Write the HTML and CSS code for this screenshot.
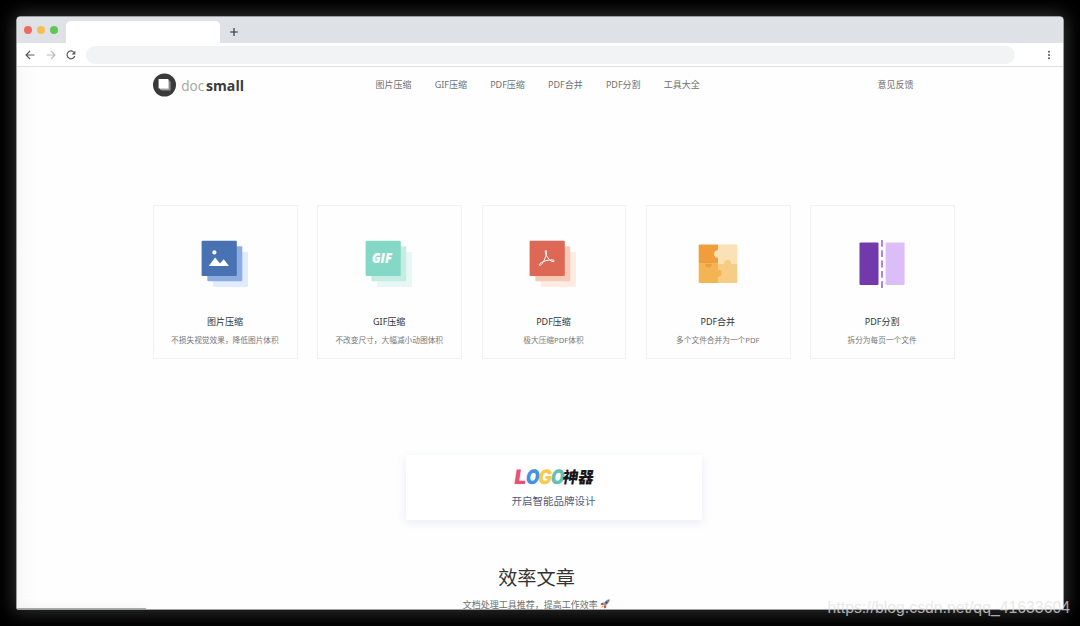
FILE: index.html
```html
<!DOCTYPE html>
<html lang="zh-CN">
<head>
    <meta charset="UTF-8">
    <meta name="viewport" content="width=device-width, initial-scale=1.0">
    <title>docsmall</title>
    <link rel="stylesheet" href="styles.css">
</head>
<body>
    <div class="window">
        <div class="tabbar">
            <div class="lights">
                <span class="light red"></span>
                <span class="light yellow"></span>
                <span class="light green"></span>
            </div>
            <div class="tab"></div>
            <svg class="plus" width="10" height="10" viewBox="0 0 10 10"><path d="M5 1v8M1 5h8" stroke="#333639" stroke-width="1.2"/></svg>
        </div>
        <div class="toolbar">
            <svg width="10" height="10" viewBox="0 0 10 10" fill="none" stroke="#55585c" stroke-width="1.1"><path d="M9.4 5H1.2M5 1L1 5l4 4"/></svg>
            <svg width="10" height="10" viewBox="0 0 10 10" fill="none" stroke="#b9bbbe" stroke-width="1.1"><path d="M.6 5h8.2M5 1l4 4-4 4"/></svg>
            <svg width="10" height="10" viewBox="0 0 10 10" fill="none" stroke="#55585c" stroke-width="1.2"><path d="M8.7 6A3.9 3.9 0 1 1 7.9 2.3"/><path d="M9.3.7v3.7H5.6z" fill="#55585c" stroke="none"/></svg>
            <div class="address"></div>
            <svg class="more" width="4" height="10" viewBox="0 0 4 10" fill="#505357"><circle cx="2" cy="1.7" r="1"/><circle cx="2" cy="5" r="1"/><circle cx="2" cy="8.3" r="1"/></svg>
        </div>

        <div class="page">
            <header class="header">
                <svg class="logo" width="94" height="24" viewBox="0 0 94 24">
                    <circle cx="11.5" cy="12" r="11.5" fill="#3a3a3a"/>
                    <path d="M8.5 8.5h9.3v9.3H8.5z" fill="#777"/>
                    <path d="M7 7.3h9.4v9.4H7z" fill="#aaa"/>
                    <path d="M5.6 6.1h9.8v9.5H5.6z" fill="#fff"/>
                    <text class="logo-doc" x="28.3" y="17.7" textLength="23" lengthAdjust="spacingAndGlyphs">doc</text>
                    <text class="logo-small" x="53" y="17.7" textLength="38" lengthAdjust="spacingAndGlyphs">small</text>
                </svg>
                <nav class="nav">
                    <a>图片压缩</a>
                    <a>GIF压缩</a>
                    <a>PDF压缩</a>
                    <a>PDF合并</a>
                    <a>PDF分割</a>
                    <a>工具大全</a>
                </nav>
                <a class="feedback">意见反馈</a>
            </header>

            <div class="cards">
                <div class="card">
                    <svg class="icon" width="50" height="50" viewBox="0 0 50 50">
                        <rect x="13" y="13" width="35" height="35" rx="1" fill="#e1ebfd"/>
                        <rect x="7.3" y="7.3" width="35" height="35" rx="1" fill="#8dace1"/>
                        <rect x="1.6" y="1.7" width="35.2" height="35.2" rx="1" fill="#4872b1"/>
                        <circle cx="14.4" cy="13.4" r="2.1" fill="#fff"/>
                        <path d="M8.8 27l6.3-8.6 4.9 6 3.7-4.1L29 27z" fill="#fff"/>
                    </svg>
                    <h3>图片压缩</h3>
                    <p>不损失视觉效果，降低图片体积</p>
                </div>
                <div class="card">
                    <svg class="icon" width="50" height="50" viewBox="0 0 50 50">
                        <rect x="13" y="13" width="35" height="35" rx="1" fill="#e7f8f4"/>
                        <rect x="7.3" y="7.3" width="35" height="35" rx="1" fill="#c7ece3"/>
                        <rect x="1.6" y="1.7" width="35.2" height="35.2" rx="1" fill="#86d8c6"/>
                        <text class="gif" x="8" y="24.4" textLength="20" lengthAdjust="spacingAndGlyphs">GIF</text>
                    </svg>
                    <h3>GIF压缩</h3>
                    <p>不改变尺寸，大幅减小动图体积</p>
                </div>
                <div class="card">
                    <svg class="icon" width="50" height="50" viewBox="0 0 50 50">
                        <rect x="13" y="13" width="35" height="35" rx="1" fill="#fdece1"/>
                        <rect x="7.3" y="7.3" width="35" height="35" rx="1" fill="#f7cab7"/>
                        <rect x="1.6" y="1.7" width="35.2" height="35.2" rx="1" fill="#dc6855"/>
                        <path d="M18.1 11.5c-1.3 0-1 2.2.4 5 1.5 3 4 5.8 6.5 6.2 1.5.2 1.8-1.2.3-1.6-3-.6-7.2.2-10.4 1.7-2.6 1.2-4.1 2.5-3.5 3.4.9 1 3.2-1.7 4.9-5.2 1.8-3.5 3.1-9.5 1.8-9.5z" fill="none" stroke="#fff" stroke-width="1"/>
                    </svg>
                    <h3>PDF压缩</h3>
                    <p>极大压缩PDF体积</p>
                </div>
                <div class="card">
                    <svg class="icon" width="50" height="50" viewBox="0 0 50 50">
                        <path d="M5.7 6.5q0-1 1-1H25v19.3H5.7z" fill="#f09e3b"/>
                        <path d="M25 5.5h18.300q1 0 1 1v18.300H25z" fill="#fae1b6"/>
                        <path d="M5.7 24.8H25v19.300H6.700q-1 0-1-1z" fill="#f4b453"/>
                        <path d="M25 24.8h19.300v18.300q0 1-1 1H25z" fill="#f7cd85"/>
                        <path d="M25.1 11.300c-2-.5-4 .8-4 3.700s2 4.200 4 3.700z" fill="#fae1b6"/>
                        <path d="M12 24.700c-.3 2 1.200 3.700 3.500 3.700s3.800-1.700 3.500-3.700z" fill="#f09e3b"/>
                        <path d="M24.900 30.800c2-.3 3.700 1.200 3.700 3.500s-1.700 3.800-3.700 3.500z" fill="#f4b453"/>
                        <path d="M31 24.900c-.3-2.200 1.200-3.900 3.500-3.900s3.800 1.700 3.500 3.900z" fill="#f7cd85"/>
                    </svg>
                    <h3>PDF合并</h3>
                    <p>多个文件合并为一个PDF</p>
                </div>
                <div class="card">
                    <svg class="icon" width="50" height="50" viewBox="0 0 50 50">
                        <rect x="2.5" y="3.5" width="19" height="42.5" rx="1" fill="#7239ad"/>
                        <rect x="28.6" y="3.5" width="19" height="42.5" rx="1" fill="#dbbdf8"/>
                        <path d="M25 1v48" stroke="#a974e8" stroke-width="1.8" stroke-dasharray="6.8 3.5"/>
                    </svg>
                    <h3>PDF分割</h3>
                    <p>拆分为每页一个文件</p>
                </div>
            </div>

            <div class="banner">
                <svg width="84" height="22" viewBox="0 0 84 22">
                    <g class="brand" transform="translate(1.5 16.5) skewX(-9)">
                        <text x="0" y="0" fill="#ec5078" textLength="12" lengthAdjust="spacingAndGlyphs">L</text>
                        <text x="11.5" y="0" fill="#4292e4" textLength="13.5" lengthAdjust="spacingAndGlyphs">O</text>
                        <text x="24" y="0" fill="#f8c94c" textLength="13.5" lengthAdjust="spacingAndGlyphs">G</text>
                        <text x="36.5" y="0" fill="#62c1b5" textLength="13.5" lengthAdjust="spacingAndGlyphs">O</text>
                        <text class="brand-cn" x="48.5" y="-.8" textLength="31" lengthAdjust="spacingAndGlyphs">神器</text>
                    </g>
                </svg>
                <p>开启智能品牌设计</p>
            </div>

            <div class="articles">
                <h2>效率文章</h2>
                <p>文档处理工具推荐，提高工作效率
                    <svg width="10" height="10" viewBox="0 0 10 10">
                        <path d="M4 3.6L1.3 4 .5 5.8l2.3.2zM6.4 6L6 8.700l-1.800.8L4 7.200z" fill="#c9463d"/>
                        <path d="M9.5.5C6.8.6 4.6 2.3 2.9 5.6l1.5 1.5C7.700 5.400 9.400 3.200 9.500.5z" fill="#7d97a6"/>
                        <path d="M9.5.5L7.400.9l1.700 1.700z" fill="#c9463d"/>
                        <circle cx="6.5" cy="3.5" r="1" fill="#234766"/>
                        <path d="M2.6 6.200L.7 9.300l3.100-1.900z" fill="#f5a13a"/>
                    </svg>
                </p>
            </div>
        </div>
        <div class="statusbar"></div>
    </div>
    <div class="watermark">https://blog.csdn.net/qq_41633604</div>
</body>
</html>
```
FILE: styles.css
```css
body {
    margin: 0;
    height: 626px;
    padding: 16px 16px 16px;
    box-sizing: border-box;
    overflow: hidden;
    background-color: #000;
    font-family: "Noto Sans", "Noto Sans CJK SC", sans-serif;
    color: #333;
}
h2, h3, p {
    margin: 0;
    font-weight: 400;
}
.window {
    position: relative;
    height: 594px;
    box-sizing: border-box;
    border: 1px solid #9c9d9f;
    border-radius: 4px 4px 2px 2px;
    background: linear-gradient(to right, #f9f9f9, #fefefe 20px);
    box-shadow: 0 0 18px 2px rgba(255,255,255,0.2);
    overflow: hidden;
}
.tabbar {
    display: flex;
    height: 26px;
    background-color: #dee1e6;
}
.lights {
    display: flex;
    gap: 5px;
    padding: 9px 8px 0 7px;
}
.light {
    width: 8px;
    height: 8px;
    border-radius: 50%;
}
.red {
    background-color: #ed6a5e;
}
.yellow {
    background-color: #f5bf4f;
}
.green {
    background-color: #61c554;
}
.tab {
    width: 154px;
    height: 22px;
    margin-top: 4px;
    border-radius: 5px 5px 0 0;
    background-color: #fff;
}
.plus {
    margin: 10px 0 0 9px;
}
.toolbar {
    display: flex;
    align-items: center;
    gap: 10.5px;
    height: 23px;
    padding: 0 12px 0 8px;
    background-color: #fff;
    border-bottom: 1px solid #dfe0e2;
}
.address {
    width: 929px;
    height: 18px;
    margin-left: -1px;
    border-radius: 9px;
    background-color: #f1f3f4;
}
.more {
    margin-left: auto;
}
.page {
    width: 802px;
    margin-left: 136px;
}
.header {
    display: flex;
    align-items: center;
    height: 36px;
    font-size: 9px;
    color: #707070;
}
.logo {
    display: block;
    overflow: visible;
}
.logo-doc,
.logo-small {
    font-family: "Open Sans", sans-serif;
    font-size: 15px;
    font-weight: 500;
    fill: #a5a5a5;
}
.logo-small {
    font-weight: 700;
    fill: #3a3a3a;
}
.nav {
    display: flex;
    gap: 23.2px;
    margin: -2px 0 0 128.5px;
}
.feedback {
    margin: -2px 41.5px 0 auto;
}
.cards {
    display: grid;
    grid-template-columns: repeat(5, 1fr);
    gap: 19.5px;
    margin-top: 102px;
}
.card {
    height: 154px;
    box-sizing: border-box;
    border: 1px solid #f2f2f2;
    text-align: center;
}
.icon {
    display: block;
    margin: 33px auto 25px;
    position: relative;
    left: -0.5px;
}
.gif {
    font-family: "Open Sans", sans-serif;
    font-size: 13.5px;
    font-weight: 800;
    font-style: italic;
    fill: #fff;
}
.card h3 {
    margin-right: 1px;
    font-size: 9px;
    line-height: 16px;
    color: #333;
}
.card p {
    margin: 3px 1px 0 0;
    font-size: 7.7px;
    line-height: 14px;
    color: #777;
}
.banner {
    width: 296px;
    height: 65px;
    box-sizing: border-box;
    margin: 96px 0 0 252.5px;
    padding-top: 12px;
    text-align: center;
    background-color: #fff;
    box-shadow: 0 3px 9px rgba(80,110,220,0.12);
}
.banner svg {
    display: block;
    margin: 0 auto;
    overflow: visible;
}
.banner p {
    margin-top: 4px;
    font-size: 10.5px;
    line-height: 16px;
    color: #505d82;
}
.brand {
    font-family: Inter, sans-serif;
    font-size: 20px;
    font-weight: 900;
}
.brand-cn {
    font-family: "Noto Sans CJK SC", sans-serif;
    font-size: 16px;
    fill: #181818;
}
.articles {
    width: 767px;
    margin-top: 43px;
    text-align: center;
}
.articles h2 {
    font-size: 19.2px;
    line-height: 30px;
    color: #333;
}
.articles p {
    margin-top: 5px;
    font-size: 9px;
    line-height: 14px;
    color: #707070;
}
.articles svg {
    vertical-align: -1px;
}
.statusbar {
    position: absolute;
    left: 0;
    bottom: 0;
    width: 129px;
    height: 1px;
    background-color: #a5aaa8;
    box-shadow: 0 0 8px rgba(0,0,0,0.25);
}
.watermark {
    position: absolute;
    right: 10px;
    bottom: 8px;
    font-family: "Liberation Sans", Arial, sans-serif;
    font-size: 15.8px;
    line-height: 20px;
    white-space: nowrap;
    color: rgba(225,225,225,0.75);
}
```
